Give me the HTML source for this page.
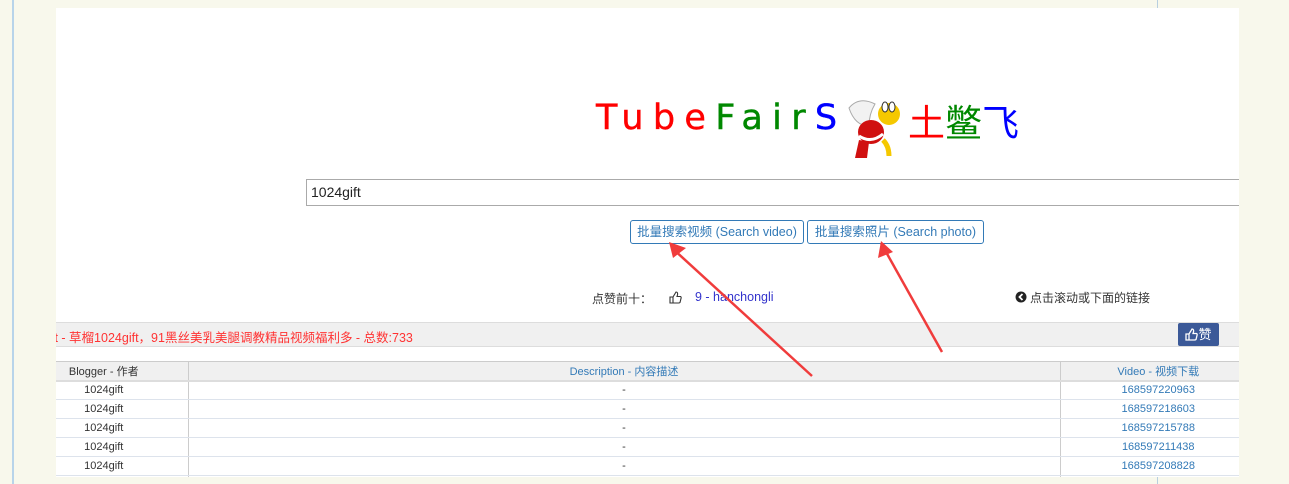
<!DOCTYPE html>
<html><head><meta charset="utf-8"><style>
*{margin:0;padding:0;box-sizing:border-box}
body{width:1289px;height:484px;background:#f8f8ec;position:relative;overflow:hidden;font-family:"Liberation Sans","Noto Sans CJK SC",sans-serif;font-size:12px;color:#333}
.abs{position:absolute}
#panel{left:56px;top:8px;width:1183px;height:469px;background:#fff;overflow:hidden}
.title{left:540px;top:90px;font-size:35px;letter-spacing:9.3px;white-space:nowrap;font-family:"DejaVu Sans",sans-serif;-webkit-text-stroke:0.4px}
.btn{top:212px;height:24px;border:1px solid #337ab7;border-radius:3px;color:#337ab7;font-size:12.5px;line-height:22px;text-align:center;background:#fff}
table{border-collapse:collapse;position:absolute;left:-36px;top:353px;width:1236px;font-size:11px}
td,th{height:19px;border-bottom:1px solid #dde3ec;text-align:center;font-weight:normal;padding:0}
th{background:#f0f0f0;border-top:1px solid #ccc;border-bottom:2px solid #ddd;color:#337ab7}
td.c,th.c{border-left:1px solid #ccc;border-right:1px solid #ccc}
.lnk{color:#337ab7}
</style></head><body>
<div class="abs" style="left:12px;top:0;width:2px;height:484px;background:#b8d4ea"></div>
<div class="abs" style="left:1157px;top:0;width:1px;height:484px;background:#b8cfe0"></div>
<div class="abs" id="panel">
 <div class="abs title"><span style="color:#f00">Tube</span><span style="color:#080">Fair</span><span style="color:#00f">S</span></div>
 <svg class="abs" style="left:791px;top:88px" width="58" height="64" viewBox="0 0 58 64">
  <path d="M2 12 Q12 0 28 8 Q22 18 22 30 Q8 30 2 12Z" fill="#f2f2f2" stroke="#aaa"/>
  <ellipse cx="24" cy="36" rx="13" ry="12" fill="#d01010"/>
  <path d="M12 40 Q24 48 36 38" stroke="#fff" stroke-width="3" fill="none"/>
  <circle cx="42" cy="18" r="11" fill="#f5c800"/>
  <ellipse cx="38" cy="11" rx="3" ry="5" fill="#fff" stroke="#333"/>
  <ellipse cx="45" cy="11" rx="3" ry="5" fill="#fff" stroke="#333"/>
  <path d="M36 44 Q42 50 42 60" stroke="#f5c800" stroke-width="5" fill="none"/>
  <path d="M12 44 L8 62 L20 62 L22 46Z" fill="#d01010"/>
 </svg>
 <div class="abs" style="left:852px;top:88px;font-size:37px;white-space:nowrap;font-family:'Noto Sans CJK SC',sans-serif;line-height:48px"><span style="color:#f00">土</span><span style="color:#080">鳖</span><span style="color:#00f">飞</span></div>
 <div class="abs" style="left:250px;top:171px;width:960px;height:27px;border:1px solid #aaa;border-right:none;font-size:14px;line-height:25px;padding-left:4px;color:#222">1024gift</div>
 <div class="abs btn" style="left:574px;width:174px">批量搜索视频 (Search video)</div>
 <div class="abs btn" style="left:751px;width:177px">批量搜索照片 (Search photo)</div>
 <div class="abs" style="left:536px;top:282px;font-size:12px;color:#333">点赞前十：</div>
 <svg class="abs" style="left:613px;top:283px" width="13" height="13" viewBox="0 0 13 13"><path d="M1 6h3v6H1z M4 6 L7 1 Q9 1 8.5 4 L8 5.5 H11.5 Q12.5 6 12 7.5 L11 11.5 Q10.5 12 9.5 12 H4" fill="none" stroke="#333" stroke-width="1.1"/></svg>
 <div class="abs" style="left:639px;top:282px;font-size:12.5px;color:#33c">9 - hanchongli</div>
 <svg class="abs" style="left:959px;top:283px" width="12" height="12" viewBox="0 0 12 12"><circle cx="6" cy="6" r="5.5" fill="#222"/><path d="M7.5 3 L4.5 6 L7.5 9" stroke="#fff" stroke-width="1.8" fill="none"/></svg>
 <div class="abs" style="left:974px;top:281px;font-size:12px;color:#333">点击滚动或下面的链接</div>
 <div class="abs" style="left:0;top:314px;width:1183px;height:25px;background:#f0f0f0;border-top:1px solid #ddd;border-bottom:1px solid #ddd"></div>
 <div class="abs" style="left:-5px;top:319px;font-size:12.5px;color:#f33;white-space:nowrap">ft - 草榴1024gift，91黑丝美乳美腿调教精品视频福利多 - 总数:733</div>
 <div class="abs" style="left:1122px;top:315px;width:41px;height:23px;background:#3b5998;border-radius:2px;color:#fff;font-size:13px;line-height:23px;text-align:center"><svg width="13" height="13" viewBox="0 0 13 13" style="vertical-align:-2px"><path d="M1 6h3v6H1z M4 6 L7 1 Q9 1 8.5 4 L8 5.5 H11.5 Q12.5 6 12 7.5 L11 11.5 Q10.5 12 9.5 12 H4" fill="none" stroke="#fff" stroke-width="1.3"/></svg>赞</div>
 <table>
  <tr><th style="width:168px;color:#333">Blogger - 作者</th><th class="c">Description - 内容描述</th><th style="width:196px">Video - 视频下载</th></tr>
  <tr><td>1024gift</td><td class="c">-</td><td class="lnk">168597220963</td></tr>
  <tr><td>1024gift</td><td class="c">-</td><td class="lnk">168597218603</td></tr>
  <tr><td>1024gift</td><td class="c">-</td><td class="lnk">168597215788</td></tr>
  <tr><td>1024gift</td><td class="c">-</td><td class="lnk">168597211438</td></tr>
  <tr><td>1024gift</td><td class="c">-</td><td class="lnk">168597208828</td></tr>
  <tr><td></td><td class="c"></td><td></td></tr>
 </table>
</div>
<svg class="abs" style="left:0;top:0" width="1289" height="484">
 <path d="M812 376 L672 248" stroke="#f03c3c" stroke-width="2.5"/>
 <path d="M942 352 L881 243" stroke="#f03c3c" stroke-width="2.5"/>
 <path d="M881 241 L878 258 L893 252 Z" fill="#f03c3c"/>
 <path d="M669 242 L673 258 L686 248 Z" fill="#f03c3c"/>
</svg>
</body></html>
